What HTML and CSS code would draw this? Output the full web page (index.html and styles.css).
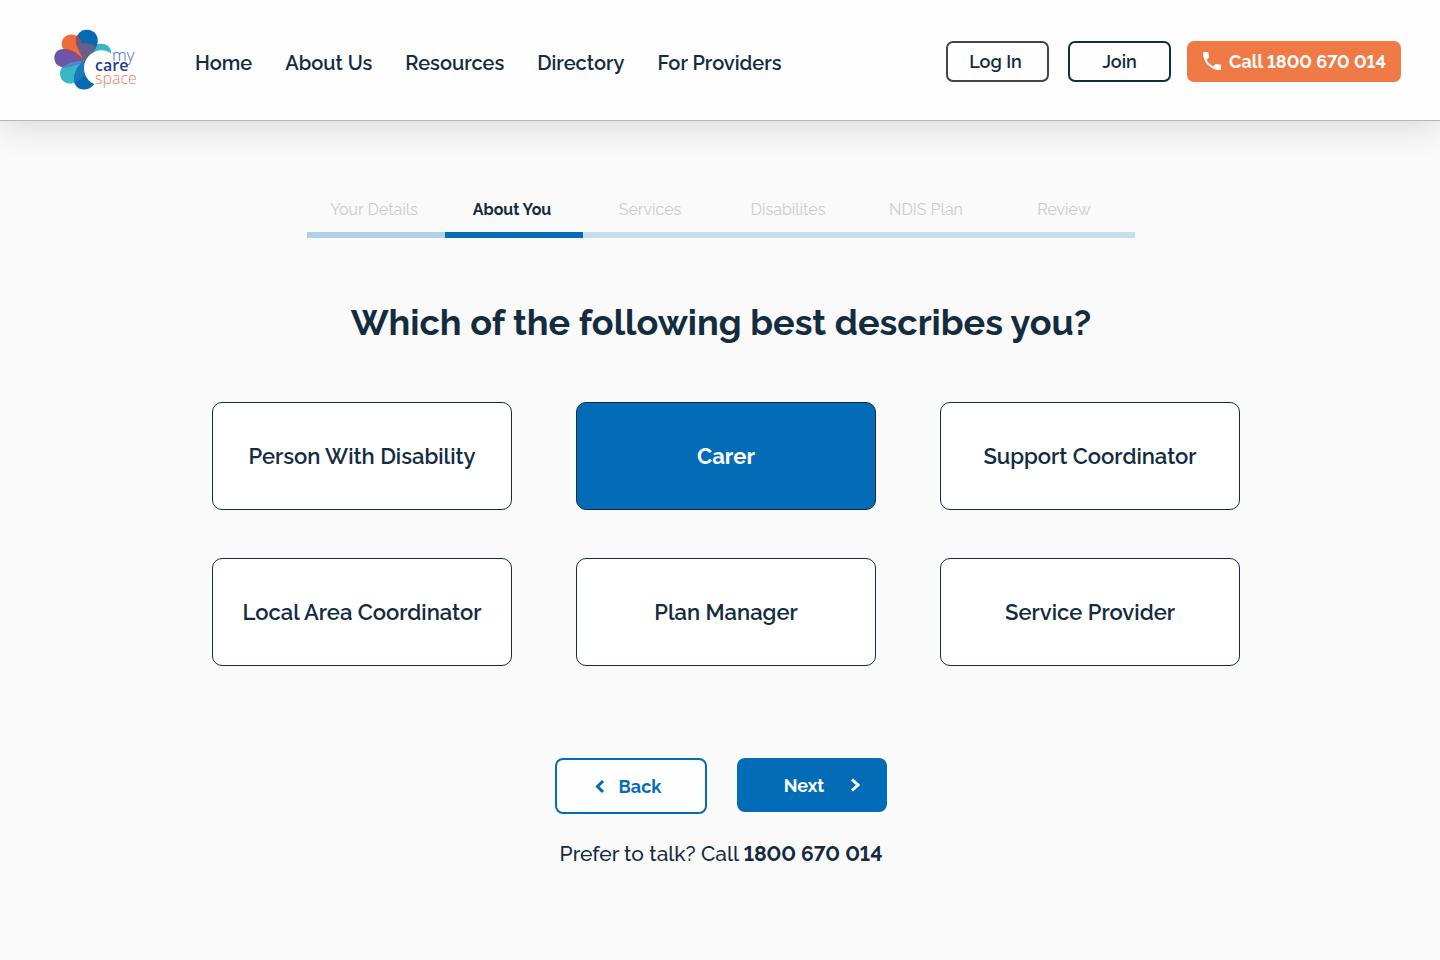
FILE: index.html
```html
<!DOCTYPE html>
<html lang="en">
<head>
<meta charset="utf-8">
<meta name="viewport" content="width=device-width, initial-scale=1">
<title>My Care Space</title>
<link rel="stylesheet" href="styles.css">
</head>
<body>
<header class="header">
  <a class="logo" href="#" aria-label="My Care Space">
    <svg width="84" height="64" viewBox="42 22 252 192" aria-hidden="true">
      <path d="M134 122L163 76C172 68 184 68 194 71C209 76 215 86 213 104L190 112Z" fill="#35b8c4"/>
      <path d="M134 120L78 132C62 138 58 152 61 166C66 188 90 194 106 184L134 160Z" fill="#35b8c4"/>
      <path d="M134 124L82 139C58 143 43 130 43 111C43 92 60 82 80 86L110 96Z" fill="#6956a8"/>
      <path d="M134 122L76 90C62 80 61 60 75 48C92 35 114 42 122 62L140 100Z" fill="#f26b3a"/>
      <path d="M134 124L111 76C102 50 116 27 140 27C165 27 178 48 172 70C166 90 150 108 134 124Z" fill="#0869b3"/>
      <path d="M134 122L111 76C105 62 107 50 111 43C117 48 120 56 124 66Z" fill="#8a4f70"/>
      <path d="M134 122L82 94C75 90 71 88 67 86C90 80 114 96 134 122Z" fill="#8e4a7c"/>
      <path d="M134 122L112 78C120 68 130 66 140 67C152 69 162 74 169 80C160 98 146 112 134 122Z" fill="#65608a"/>
      <path d="M134 120L98 124C82 128 72 138 66 141C78 143 92 138 106 133L134 128Z" fill="#5485c6"/>
      <path d="M132 120C104 142 94 178 108 196C120 212 150 210 162 191L148 120Z" fill="#0869b3"/>
      <path d="M134 120C118 130 104 148 102 174C102 180 103 184 105 185C118 178 128 168 138 160Z" fill="#1b78bd"/>
      <path d="M212 98C184 76 142 94 133 130C128 160 142 186 172 193L218 180L220 105Z" fill="#fefefe"/>
      <g font-family="'Open Sans', sans-serif">
        <text x="216" y="122" font-size="50" font-weight="300" fill="#4762ad">my</text>
        <text x="165" y="151" font-size="48" font-weight="600" fill="#293c91">care</text>
        <text x="165" y="189" font-size="48" font-weight="300" fill="#ee7f58">space</text>
      </g>
    </svg>
  </a>
  <nav class="nav" aria-label="Main">
    <a href="#">Home</a>
    <a href="#">About Us</a>
    <a href="#">Resources</a>
    <a href="#">Directory</a>
    <a href="#">For Providers</a>
  </nav>
  <div class="actions">
    <button class="action login" type="button">Log In</button>
    <button class="action join" type="button">Join</button>
    <a class="action call" href="tel:1800670014">
      <svg width="24" height="24" viewBox="0 0 24 24" aria-hidden="true"><path fill="currentColor" d="M6.6 10.8c1.4 2.8 3.8 5.1 6.6 6.6l2.2-2.2c.3-.3.7-.4 1-.2 1.100.4 2.300.6 3.600.6.6 0 1 .4 1 1V20c0 .6-.4 1-1 1C10.600 21 3 13.400 3 4c0-.6.4-1 1-1h3.500c.6 0 1 .4 1 1 0 1.300.2 2.500.6 3.600.1.300 0 .700-.2 1z"/></svg>
      Call 1800 670 014
    </a>
  </div>
</header>
<main class="main">
  <ol class="steps">
    <li class="step done">Your Details</li>
    <li class="step current" aria-current="step">About You</li>
    <li class="step">Services</li>
    <li class="step">Disabilites</li>
    <li class="step">NDIS Plan</li>
    <li class="step">Review</li>
  </ol>
  <h1 class="title">Which of the following best describes you?</h1>
  <div class="options">
    <button class="option" type="button">Person With Disability</button>
    <button class="option selected" type="button" aria-pressed="true">Carer</button>
    <button class="option" type="button">Support Coordinator</button>
    <button class="option" type="button">Local Area Coordinator</button>
    <button class="option" type="button">Plan Manager</button>
    <button class="option" type="button">Service Provider</button>
  </div>
  <div class="pager">
    <button class="back" type="button">
      <svg width="10" height="16" viewBox="0 0 10 16" aria-hidden="true"><path d="M8 3 2.500 8.500 8 14" fill="none" stroke="currentColor" stroke-width="3"/></svg>
      Back
    </button>
    <button class="next" type="button">
      Next
      <svg width="10" height="16" viewBox="0 0 10 16" aria-hidden="true"><path d="m2 2.500 6 5.500-6 5.500" fill="none" stroke="currentColor" stroke-width="3"/></svg>
    </button>
  </div>
  <p class="talk">Prefer to talk? Call <strong>1800 670 014</strong></p>
</main>
</body>
</html>
```

FILE: styles.css
```css
:root {
  --ink: #132c3f;
  --blue: #026cb6;
}

* {
  box-sizing: border-box;
}

body {
  margin: 0;
  background: #fafafa;
  color: var(--ink);
  font-family: Raleway, "Open Sans", sans-serif;
  font-variant-numeric: lining-nums;
}

a {
  color: inherit;
  text-decoration: none;
}

button {
  font: inherit;
  color: inherit;
  cursor: pointer;
}

.header {
  display: flex;
  align-items: center;
  min-height: 121px;
  padding: 0 39px 0 54px;
  background: #fefefe;
  border-bottom: 1px solid #b4b8b7;
  box-shadow: 0 4px 32px rgba(0, 0, 0, 0.15);
}

.logo svg {
  display: block;
}

.nav {
  display: flex;
  gap: 33px;
  margin: 5px 0 0 57px;
  font-size: 20px;
  font-weight: 600;
  line-height: 26px;
}

.actions {
  display: flex;
  margin: 2px 0 0 auto;
}

.action {
  display: flex;
  align-items: center;
  justify-content: center;
  width: 103px;
  height: 41px;
  padding: 0;
  border: 2px solid var(--ink);
  border-radius: 7px;
  background: #fefefe;
  font-size: 18px;
  font-weight: 600;
}

.login {
  margin-right: 19px;
  padding-right: 4px;
  border-color: #454545;
}

.call {
  gap: 5px;
  width: 214px;
  margin-left: 16px;
  padding-right: 2px;
  border: 0;
  background: #f07a46;
  color: #fff;
  font-weight: 700;
}

.main {
  display: flex;
  flex-direction: column;
  align-items: center;
  padding: 76px 24px 64px 26px;
}

.steps {
  display: grid;
  grid-template-columns: repeat(6, 1fr);
  width: 100%;
  max-width: 828px;
  margin: 0;
  padding: 0;
  list-style: none;
}

.step {
  padding: 1px 4px 10px 0;
  border-bottom: 6px solid #c9deec;
  color: #ccc;
  font-size: 16px;
  line-height: 24px;
  text-align: center;
}

.done {
  border-color: #b0d0e6;
}

.current {
  border-color: var(--blue);
  color: var(--ink);
  font-weight: 700;
}

.title {
  margin: 60px 0 56px;
  font-size: 36px;
  font-weight: 700;
  line-height: 48px;
  text-align: center;
}

.options {
  display: grid;
  grid-template-columns: repeat(3, 1fr);
  gap: 48px 64px;
  width: 100%;
  max-width: 1038px;
  padding-left: 10px;
}

.option {
  min-height: 108px;
  border: 1px solid var(--ink);
  border-radius: 10px;
  background: #fff;
  font-size: 22px;
  font-weight: 600;
}

.selected {
  background: var(--blue);
  color: #fff;
  font-weight: 700;
}

.pager {
  display: flex;
  gap: 30px;
  margin-top: 92px;
}

.back,
.next {
  display: flex;
  align-items: center;
  justify-content: center;
  border-radius: 8px;
  font-size: 18px;
  font-weight: 700;
}

.back {
  gap: 14px;
  width: 152px;
  height: 56px;
  padding: 0 6px 0 0;
  border: 2px solid var(--blue);
  background: #fefefe;
  color: var(--blue);
}

.next {
  gap: 26px;
  width: 150px;
  height: 54px;
  padding: 0 0 0 20px;
  border: 0;
  background: var(--blue);
  color: #fff;
}

.talk {
  margin: 26px 0 0;
  font-size: 21px;
  font-weight: 500;
  line-height: 28px;
  text-align: center;
}

.talk strong {
  font-weight: 700;
}
```
